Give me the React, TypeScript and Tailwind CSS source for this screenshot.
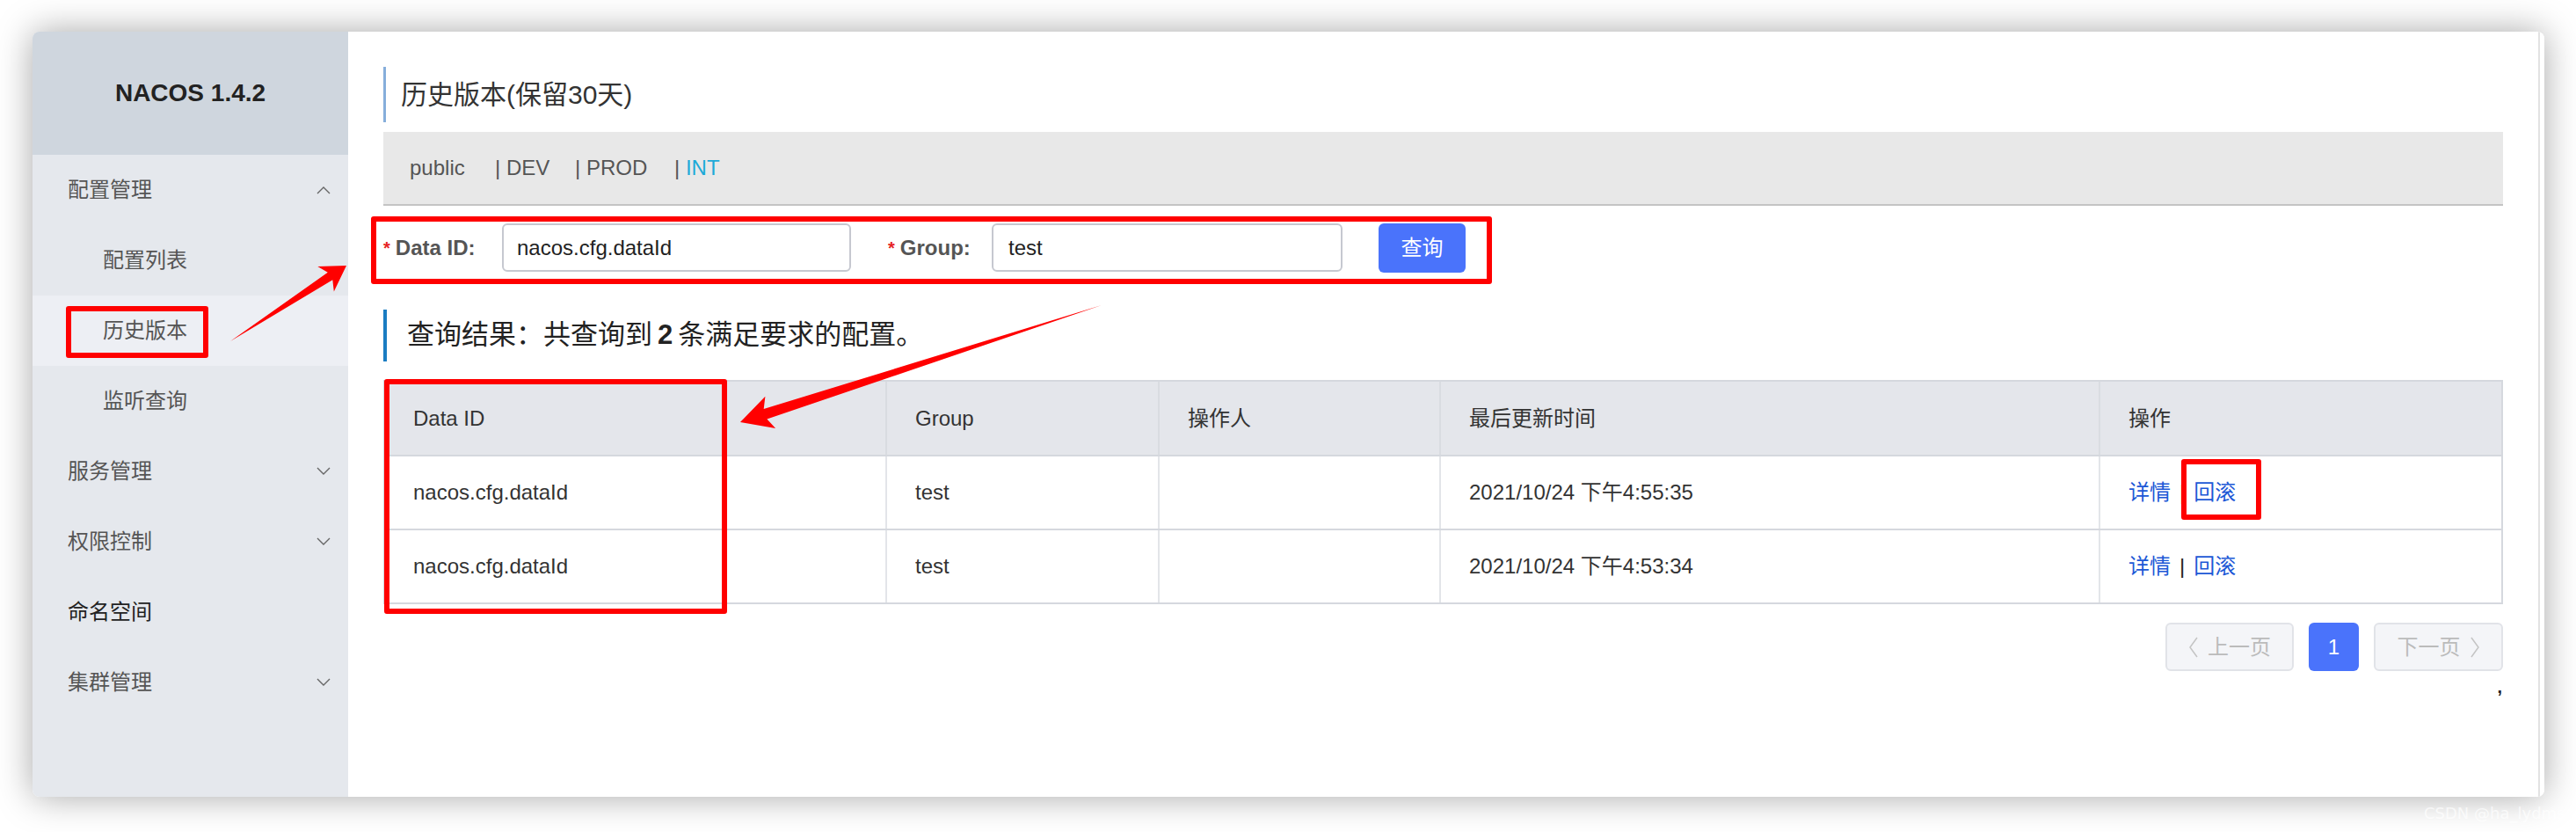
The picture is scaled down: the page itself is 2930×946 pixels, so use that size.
import React from 'react'

const menu = [
    { label: '配置管理', level: 1, chevron: 'up' },
    { label: '配置列表', level: 2 },
    { label: '历史版本', level: 2, active: true },
    { label: '监听查询', level: 2 },
    { label: '服务管理', level: 1, chevron: 'down' },
    { label: '权限控制', level: 1, chevron: 'down' },
    { label: '命名空间', level: 1, dark: true },
    { label: '集群管理', level: 1, chevron: 'down' },
]

const rows = [
    { dataId: 'nacos.cfg.dataId', group: 'test', operator: '', time: '2021/10/24 下午4:55:35' },
    { dataId: 'nacos.cfg.dataId', group: 'test', operator: '', time: '2021/10/24 下午4:53:34' },
]

// arrow shape used by the red annotations
function arrow(sx: number, sy: number, tx: number, ty: number, h: number, hw: number, w: number) {
    const L = Math.hypot(tx - sx, ty - sy)
    const ux = (tx - sx) / L, uy = (ty - sy) / L
    const nx = -uy, ny = ux
    const bx = tx - ux * h, by = ty - uy * h
    const jx = bx + ux * 6, jy = by + uy * 6
    const pts = [
        [sx, sy],
        [jx + nx * w / 2, jy + ny * w / 2],
        [bx + nx * hw, by + ny * hw],
        [tx, ty],
        [bx - nx * hw, by - ny * hw],
        [jx - nx * w / 2, jy - ny * w / 2],
    ]
    return pts.map(p => p.map(v => v.toFixed(1)).join(',')).join(' ')
}

function Chevron({ dir }: { dir: string }) {
    return (
        <svg width="16" height="10" viewBox="0 0 16 10" fill="none" stroke="#666" strokeWidth="1.4">
            {dir === 'up' ? <polyline points="1,9 8,2 15,9" /> : <polyline points="1,1 8,8 15,1" />}
        </svg>
    )
}

export default function App() {
    return (
        <div className="relative w-[2930px] h-[946px] bg-white overflow-hidden font-['Liberation_Sans','Noto_Sans_CJK_SC',sans-serif] text-[#333]">
            <div className="pt-[36px] pl-[37px]">
                <div className="flex w-[2857px] h-[870px] rounded-[8px] overflow-hidden shadow-[0_0_40px_rgba(0,0,0,0.35)] bg-white">
                    {/* sidebar */}
                    <div className="flex flex-col w-[359px] bg-[#e5e8ed]">
                        <div className="h-[140px] bg-[#cfd6de] flex items-center justify-center text-[28px] font-bold text-[#222]">NACOS 1.4.2</div>
                        {menu.map(item => (
                            <div key={item.label}
                                className={`flex items-center justify-between h-[80px] pr-[20px] text-[24px] ${item.level === 2 ? 'pl-[80px]' : 'pl-[40px]'} ${item.active ? 'bg-[#edeff4]' : ''} ${item.dark ? 'text-[#222]' : 'text-[#555]'}`}>
                                <span>{item.label}</span>
                                {item.chevron && <Chevron dir={item.chevron} />}
                            </div>
                        ))}
                    </div>
                    {/* main */}
                    <div className="flex-1 px-[40px] pt-[40px]">
                        <div className="flex items-center h-[63px] border-l-[3px] border-[#86aedb] pl-[17px] text-[30px] text-[#333]">历史版本(保留30天)</div>

                        <div className="mt-[11px] h-[84px] bg-[#e8e8e8] border-b-2 border-[#c4c4c4] flex items-center pl-[30px] text-[24px] text-[#555]">
                            <span className="w-[97px]">public</span>
                            <span className="w-[91px]">| DEV</span>
                            <span className="w-[113px]">| PROD</span>
                            <span><span className="text-[#555]">|</span> <span className="text-[#1eaad8]">INT</span></span>
                        </div>

                        <div className="mt-[20px] h-[55px] flex items-center text-[24px]">
                            <div className="w-[135px] flex items-center font-bold text-[#555]">
                                <span className="text-[#e62222] text-[20px] mr-[6px]">*</span>Data ID:
                            </div>
                            <div className="w-[397px] h-[55px] border-2 border-[#c6c8d0] rounded-[6px] flex items-center pl-[15px] text-[#222]">nacos.cfg.dataId</div>
                            <div className="ml-[42px] w-[118px] flex items-center font-bold text-[#555]">
                                <span className="text-[#e62222] text-[20px] mr-[6px]">*</span>Group:
                            </div>
                            <div className="w-[399px] h-[55px] border-2 border-[#c6c8d0] rounded-[6px] flex items-center pl-[17px] text-[#222]">test</div>
                            <button className="ml-[41px] w-[99px] h-[56px] rounded-[6px] bg-[#4a73fb] text-white text-[24px]">查询</button>
                        </div>

                        <div className="mt-[43px] h-[59px] flex items-center border-l-4 border-[#1a7cc2] pl-[23px] text-[31px] text-[#222]">
                            查询结果：共查询到 <span className="font-bold mx-[6px]">2</span> 条满足要求的配置。
                        </div>

                        <div className="mt-[21px] border-2 border-[#d5d8de] text-[24px] text-[#333]">
                            <div className="grid grid-cols-[569px_310px_320px_750px_1fr] h-[83px] bg-[#e4e6eb]">
                                <div className="flex items-center pl-[32px]">Data ID</div>
                                <div className="flex items-center pl-[32px] border-l-2 border-[#d9dce1]">Group</div>
                                <div className="flex items-center pl-[32px] border-l-2 border-[#d9dce1]">操作人</div>
                                <div className="flex items-center pl-[32px] border-l-2 border-[#d9dce1]">最后更新时间</div>
                                <div className="flex items-center pl-[32px] border-l-2 border-[#d9dce1]">操作</div>
                            </div>
                            {rows.map((r, i) => (
                                <div key={i} className="grid grid-cols-[569px_310px_320px_750px_1fr] h-[84px] border-t-2 border-[#d5d8de]">
                                    <div className="flex items-center pl-[32px]">{r.dataId}</div>
                                    <div className="flex items-center pl-[32px] border-l-2 border-[#e3e5e9]">{r.group}</div>
                                    <div className="flex items-center pl-[32px] border-l-2 border-[#e3e5e9]">{r.operator}</div>
                                    <div className="flex items-center pl-[32px] border-l-2 border-[#e3e5e9]">{r.time}</div>
                                    <div className="flex items-center pl-[32px] border-l-2 border-[#e3e5e9]">
                                        <span className="text-[#1c58d6]">详情</span>
                                        <span className="mx-[10px] text-[#222]">|</span>
                                        <span className="text-[#1c58d6]">回滚</span>
                                    </div>
                                </div>
                            ))}
                        </div>

                        <div className="mt-[21px] flex justify-end gap-[17px] text-[24px]">
                            <div className="w-[146px] h-[55px] flex items-center justify-center gap-[10px] bg-[#f4f5f8] border-2 border-[#e1e3e8] rounded-[6px] text-[#bbbbbb]">
                                <svg width="12" height="24" viewBox="0 0 12 24" fill="none" stroke="#c4c4c4" strokeWidth="1.5"><polyline points="10,1 2,12 10,23" /></svg>
                                上一页
                            </div>
                            <div className="w-[57px] h-[55px] flex items-center justify-center bg-[#4a73fb] rounded-[6px] text-white">1</div>
                            <div className="w-[147px] h-[55px] flex items-center justify-center gap-[10px] bg-[#f4f5f8] border-2 border-[#e1e3e8] rounded-[6px] text-[#bbbbbb]">
                                下一页
                                <svg width="12" height="24" viewBox="0 0 12 24" fill="none" stroke="#c4c4c4" strokeWidth="1.5"><polyline points="2,1 10,12 2,23" /></svg>
                            </div>
                        </div>
                        <div className="flex justify-end pr-[1px] mt-[8px] text-[20px] font-bold leading-none text-[#222]">,</div>
                    </div>
                    {/* scrollbar strip */}
                    <div className="w-[7px] border-l-2 border-[#e2e2e2] bg-white"></div>
                </div>
            </div>

            {/* red annotations */}
            <div className="absolute left-[75px] top-[348px] w-[162px] h-[59px] border-[6px] border-[#ff0000] rounded-[3px]"></div>
            <div className="absolute left-[422px] top-[246px] w-[1275px] h-[77px] border-[6px] border-[#ff0000] rounded-[3px]"></div>
            <div className="absolute left-[437px] top-[431px] w-[390px] h-[267px] border-[6px] border-[#ff0000] rounded-[3px]"></div>
            <div className="absolute left-[2481px] top-[522px] w-[91px] h-[69px] border-[6px] border-[#ff0000] rounded-[3px]"></div>
            <svg className="absolute left-0 top-0 pointer-events-none" width="2930" height="946">
                <polygon points={arrow(262, 388, 394, 302, 28, 17, 10)} fill="#ff0000" />
                <polygon points={arrow(1253, 347, 842, 480, 36, 19, 12)} fill="#ff0000" />
            </svg>
            <div className="absolute left-[2757px] top-[911px] text-[18px] text-white/70 font-['DejaVu_Sans',sans-serif]">CSDN @ha_lydms</div>
        </div>
    )
}
